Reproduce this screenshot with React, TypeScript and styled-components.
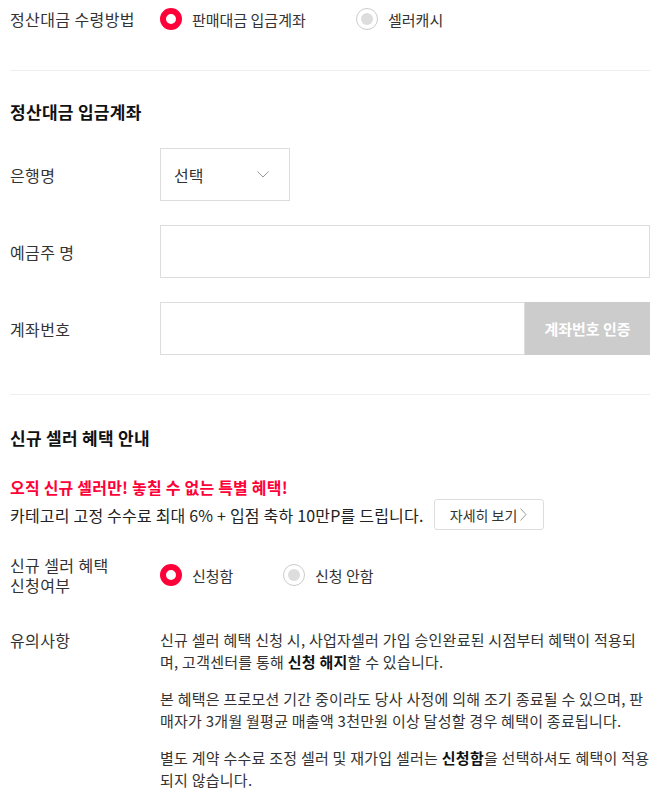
import React, {FC, useState} from 'react';
import styled, {createGlobalStyle} from 'styled-components';

const GlobalStyle = createGlobalStyle`
  body {
    margin: 0;
    background: #fff;
    color: #333;
    font-family: "Noto Sans CJK KR", "Noto Sans", sans-serif;
    font-size: 15px;
  }
`;

const Page = styled.div`
  padding: 0 7px 0 10px;
  width: 640px;
`;

const Row = styled.div<{$top?: number}>`
  display: grid;
  grid-template-columns: 150px 1fr;
  align-items: center;
  margin-top: ${p => p.$top ?? 0}px;
`;

const Label = styled.div`
  font-size: 16px;
  letter-spacing: 0.4px;
  line-height: 20px;
  color: #333;
`;

const Divider = styled.hr<{$top: number}>`
  border: none;
  border-top: 1px solid #eee;
  margin: ${p => p.$top}px 0 0;
`;

const Heading = styled.h2<{$top: number}>`
  margin: ${p => p.$top}px 0 0;
  font-size: 17px;
  letter-spacing: 0.3px;
  line-height: 24px;
  font-weight: 700;
  color: #111;
`;

const RadioGroup = styled.div`
  display: flex;
  align-items: center;
`;

const RadioOption = styled.label<{$width: number}>`
  display: flex;
  align-items: center;
  gap: 10px;
  width: ${p => p.$width}px;
  height: 38px;
  cursor: pointer;
  font-size: 15px;
  color: #333;
`;

const RadioCircle = styled.span<{$checked: boolean}>`
  box-sizing: border-box;
  width: 22px;
  height: 22px;
  border-radius: 50%;
  flex-shrink: 0;
  background: #fff;
  border: ${p => (p.$checked ? '6px solid #ff0038' : '1px solid #ccc')};
  display: flex;
  align-items: center;
  justify-content: center;

  &::after {
    content: '';
    display: ${p => (p.$checked ? 'none' : 'block')};
    width: 12px;
    height: 12px;
    border-radius: 50%;
    background: #ddd;
  }
`;

const SelectBox = styled.div`
  box-sizing: border-box;
  width: 130px;
  height: 53px;
  border: 1px solid #ddd;
  display: flex;
  align-items: center;
  justify-content: space-between;
  padding: 0 20px 0 13px;
  color: #333;
  font-size: 16px;
`;

const Input = styled.input`
  box-sizing: border-box;
  flex: 1;
  min-width: 0;
  height: 53px;
  border: 1px solid #ddd;
  padding: 0 12px;
  font: inherit;
  outline: none;
`;

const InputGroup = styled.div`
  display: flex;
`;

const VerifyButton = styled.button`
  width: 125px;
  height: 53px;
  border: none;
  background: #ccc;
  color: #fff;
  font: inherit;
  font-size: 15px;
  font-weight: 700;
  cursor: default;
`;

const Highlight = styled.p`
  margin: 26px 0 0;
  color: #ff0038;
  font-weight: 700;
  font-size: 16px;
  letter-spacing: 0.2px;
  line-height: 23px;
`;

const DescRow = styled.div`
  display: flex;
  align-items: center;
  gap: 10px;
  font-size: 16px;
  letter-spacing: 0.2px;
  color: #222;
`;

const DetailButton = styled.button`
  display: flex;
  align-items: center;
  justify-content: center;
  gap: 3px;
  width: 110px;
  height: 31px;
  border: 1px solid #ddd;
  border-radius: 3px;
  background: #fff;
  font: inherit;
  font-size: 14px;
  letter-spacing: 0;
  color: #333;
  cursor: pointer;
`;

const Notes = styled.div`
  display: flex;
  flex-direction: column;
  gap: 15px;
`;

const Note = styled.p`
  margin: 0;
  font-size: 15px;
  letter-spacing: 0.25px;
  line-height: 22px;
  color: #333;

  b {
    font-weight: 700;
    color: #111;
  }
`;

const NoteLabel = styled(Label)`
  align-self: start;
  line-height: 22px;
`;

const Chevron: FC<{dir?: 'down' | 'right'}> = ({dir = 'down'}) => (
  dir === 'down' ? (
    <svg width="12" height="7" viewBox="0 0 12 7" fill="none">
      <path d="M0.5 0.5L6 6L11.5 0.5" stroke="#999" strokeWidth="1" />
    </svg>
  ) : (
    <svg width="7" height="13" viewBox="0 0 7 13" fill="none">
      <path d="M0.5 0.5L6 6.5L0.5 12.5" stroke="#999" strokeWidth="1" />
    </svg>
  )
);

interface RadioProps {
  options: {value: string; label: string; width: number}[];
  value: string;
  onChange: (v: string) => void;
}

const Radios: FC<RadioProps> = ({options, value, onChange}) => (
  <RadioGroup>
    {options.map(o => (
      <RadioOption key={o.value} $width={o.width} onClick={() => onChange(o.value)}>
        <RadioCircle $checked={value === o.value} />
        {o.label}
      </RadioOption>
    ))}
  </RadioGroup>
);

const App: FC = () => {
  const [method, setMethod] = useState('account');
  const [benefit, setBenefit] = useState('yes');

  return (
    <Page>
      <GlobalStyle />
      <Row>
        <Label>정산대금 수령방법</Label>
        <Radios
          value={method}
          onChange={setMethod}
          options={[
            {value: 'account', label: '판매대금 입금계좌', width: 196},
            {value: 'cash', label: '셀러캐시', width: 120},
          ]}
        />
      </Row>

      <Divider $top={32} />

      <Heading $top={29}>정산대금 입금계좌</Heading>

      <Row $top={24}>
        <Label>은행명</Label>
        <SelectBox>
          선택
          <Chevron />
        </SelectBox>
      </Row>

      <Row $top={24}>
        <Label>예금주 명</Label>
        <InputGroup>
          <Input />
        </InputGroup>
      </Row>

      <Row $top={24}>
        <Label>계좌번호</Label>
        <InputGroup>
          <Input />
          <VerifyButton>계좌번호 인증</VerifyButton>
        </InputGroup>
      </Row>

      <Divider $top={39} />

      <Heading $top={31}>신규 셀러 혜택 안내</Heading>

      <Highlight>오직 신규 셀러만! 놓칠 수 없는 특별 혜택!</Highlight>
      <DescRow>
        카테고리 고정 수수료 최대 6% + 입점 축하 10만P를 드립니다.
        <DetailButton>
          자세히 보기
          <Chevron dir="right" />
        </DetailButton>
      </DescRow>

      <Row $top={25}>
        <Label>
          신규 셀러 혜택
          <br />
          신청여부
        </Label>
        <Radios
          value={benefit}
          onChange={setBenefit}
          options={[
            {value: 'yes', label: '신청함', width: 123},
            {value: 'no', label: '신청 안함', width: 120},
          ]}
        />
      </Row>

      <Row $top={34}>
        <NoteLabel>유의사항</NoteLabel>
        <Notes>
          <Note>
            신규 셀러 혜택 신청 시, 사업자셀러 가입 승인완료된 시점부터 혜택이 적용되며, 고객센터를 통해 <b>신청 해지</b>할 수 있습니다.
          </Note>
          <Note>
            본 혜택은 프로모션 기간 중이라도 당사 사정에 의해 조기 종료될 수 있으며, 판매자가 3개월 월평균 매출액 3천만원 이상 달성할 경우 혜택이 종료됩니다.
          </Note>
          <Note>
            별도 계약 수수료 조정 셀러 및 재가입 셀러는 <b>신청함</b>을 선택하셔도 혜택이 적용되지 않습니다.
          </Note>
        </Notes>
      </Row>
    </Page>
  );
};

export default App;
